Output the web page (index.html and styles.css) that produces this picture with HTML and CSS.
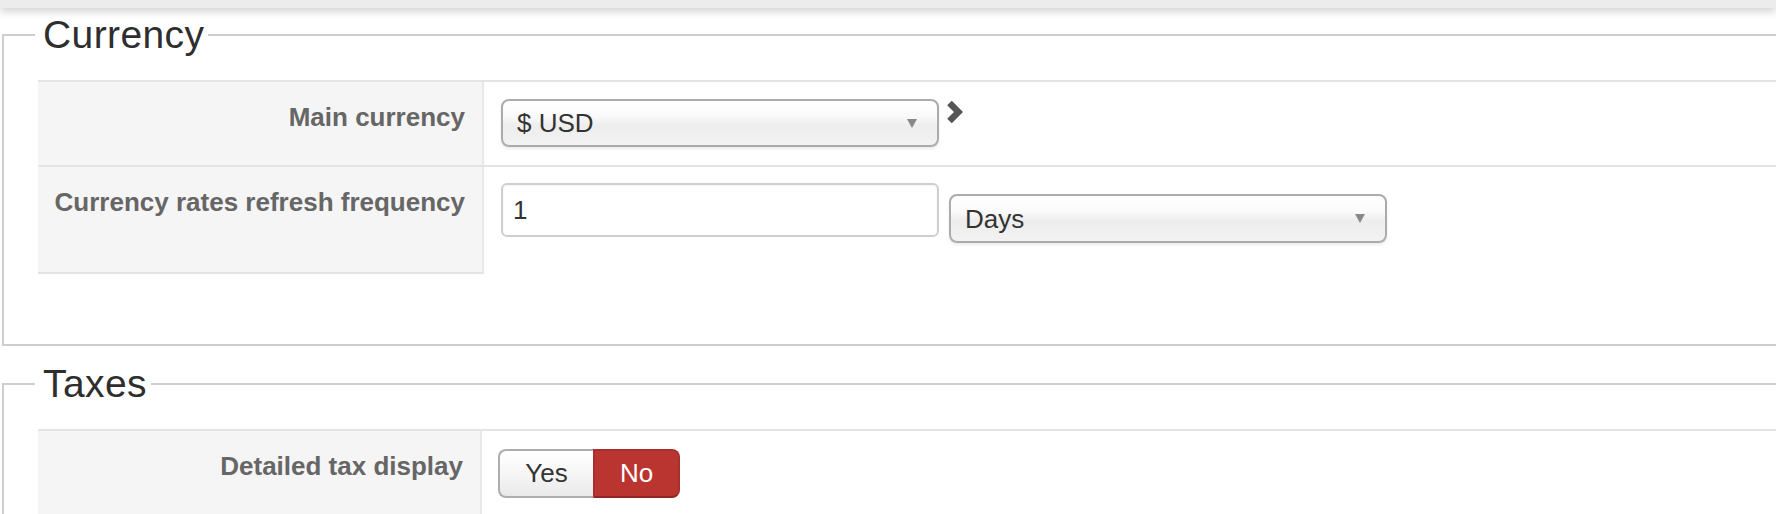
FILE: index.html
```html
<!DOCTYPE html>
<html>
<head>
<meta charset="utf-8">
<link rel="stylesheet" href="styles.css">
</head>
<body>
<div class="topbar"></div>
<div class="page">
  <fieldset class="panel panel-currency">
    <legend class="panel-title">Currency</legend>
    <div class="form">
      <div class="row">
        <div class="label">Main currency</div>
        <div class="field">
          <div class="select"><span class="select-value">$ USD</span><span class="caret"></span></div>
          <svg class="chev" width="17" height="24" viewBox="0 0 17 24"><path d="M3.5 3 L12.5 12 L3.5 21" fill="none" stroke="#555" stroke-width="6.5" stroke-linejoin="miter"/></svg>
        </div>
      </div>
      <div class="row row-last">
        <div class="label">Currency rates refresh frequency</div>
        <div class="field field-tall">
          <div class="input">1</div>
          <div class="select select-unit"><span class="select-value">Days</span><span class="caret"></span></div>
        </div>
      </div>
    </div>
  </fieldset>
  <fieldset class="panel panel-taxes">
    <legend class="panel-title">Taxes</legend>
    <div class="form">
      <div class="row">
        <div class="label label-narrow">Detailed tax display</div>
        <div class="field field-toggle">
          <div class="toggle">
            <span class="toggle-opt toggle-yes">Yes</span>
            <span class="toggle-opt toggle-no">No</span>
          </div>
        </div>
      </div>
    </div>
  </fieldset>
</div>
</body>
</html>
```

FILE: styles.css
```css
html, body {
  margin: 0;
  padding: 0;
  background: #fff;
  overflow: hidden;
}
body {
  font-family: "Liberation Sans", Arial, sans-serif;
  color: #333;
  width: 1776px;
  height: 514px;
}
.topbar {
  height: 8px;
  background: #ececec;
  box-shadow: 0 3px 9px rgba(0, 0, 0, 0.22);
  position: relative;
  z-index: 2;
}
.page {
  padding-top: 5px;
}
.panel {
  margin: 0 -80px 16px 2px;
  padding: 0 0 70px 0;
  border: 2px solid #cecece;
  min-width: 0;
}
.panel-title {
  margin-left: 31px;
  padding: 0 4px 0 8px;
  font-size: 39px;
  letter-spacing: 0.4px;
  line-height: 44px;
  font-weight: normal;
  color: #2e2e2e;
}
.form {
  margin: 23px 0 0 34px;
}
.row {
  display: flex;
  border-top: 2px solid #e4e4e4;
}
.label {
  box-sizing: border-box;
  width: 446px;
  flex: none;
  background: #f5f5f5;
  border-right: 2px solid #e8e8e8;
  padding: 17px 17px 0 0;
  text-align: right;
  font-size: 26px;
  line-height: 36px;
  font-weight: bold;
  color: #666;
}
.label-narrow {
  width: 444px;
  padding-top: 17px;
}
.row-last .label {
  border-bottom: 2px solid #e4e4e4;
}
.field {
  flex: 1;
  display: flex;
  align-items: flex-start;
  padding: 17px 0 18px 17px;
}
.field-tall {
  padding: 16px 0 31px 17px;
}
.field-toggle {
  padding: 18px 0 17px 16px;
}
.select {
  box-sizing: border-box;
  width: 438px;
  height: 48px;
  border: 2px solid #ababab;
  border-radius: 8px;
  background: linear-gradient(to bottom, #ffffff 0%, #fafafa 35%, #ededed 55%, #f2f2f2 100%);
  box-shadow: 0 2px 3px rgba(0, 0, 0, 0.08);
  display: flex;
  align-items: center;
  justify-content: space-between;
  padding: 0 20px 0 14px;
  font-size: 26px;
  line-height: 44px;
  color: #333;
}
.select-unit {
  margin: 11px 0 0 10px;
  height: 49px;
}
.caret {
  width: 0;
  height: 0;
  border-left: 5px solid transparent;
  border-right: 5px solid transparent;
  border-top: 9px solid #888;
}
.chev {
  margin: 1px 0 0 7px;
}
.input {
  box-sizing: border-box;
  width: 438px;
  height: 54px;
  border: 2px solid #cfcfcf;
  border-radius: 6px;
  background: #fff;
  box-shadow: inset 0 1px 2px rgba(0, 0, 0, 0.05);
  padding: 0 10px;
  font-size: 26px;
  line-height: 50px;
  color: #333;
}
.toggle {
  display: flex;
  height: 49px;
  font-size: 26px;
}
.toggle-opt {
  box-sizing: border-box;
  height: 49px;
  display: flex;
  align-items: center;
  justify-content: center;
}
.toggle-yes {
  width: 95px;
  border: 2px solid #adadad;
  border-right: none;
  border-radius: 8px 0 0 8px;
  background: linear-gradient(to bottom, #ffffff 0%, #f6f6f6 50%, #e9e9e9 100%);
  color: #333;
}
.toggle-no {
  width: 87px;
  border: 2px solid #a8302c;
  border-bottom-color: #8e2622;
  border-radius: 0 8px 8px 0;
  background: #bb3530;
  color: #fff;
}
```
